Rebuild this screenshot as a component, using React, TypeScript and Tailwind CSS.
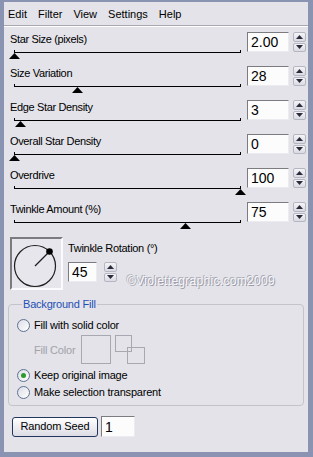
import type { ReactNode } from 'react'

const font = { fontFamily: '"Liberation Sans", Arial, sans-serif' }

const sliders = [
  { label: 'Star Size (pixels)', value: '2.00', thumb: 0 },
  { label: 'Size Variation', value: '28', thumb: 63 },
  { label: 'Edge Star Density', value: '3', thumb: 6 },
  { label: 'Overall Star Density', value: '0', thumb: 0 },
  { label: 'Overdrive', value: '100', thumb: 226 },
  { label: 'Twinkle Amount (%)', value: '75', thumb: 171 },
]

function Spinner() {
  return (
    <div className="flex h-[20px] w-[13px] flex-col gap-[1px]">
      {[true, false].map((up) => (
        <div
          key={String(up)}
          className="flex flex-1 items-center justify-center rounded-[2px] border border-[#b4b6c2] bg-gradient-to-b from-[#f4f4f8] to-[#d9dae2]"
        >
          <svg width="7" height="4" viewBox="0 0 7 4">
            <path d={up ? 'M0 4 L3.5 0 L7 4 Z' : 'M0 0 L3.5 4 L7 0 Z'} fill="#2a2a3a" />
          </svg>
        </div>
      ))}
    </div>
  )
}

function NumBox({ value, w }: { value: string; w: string }) {
  return (
    <div
      className={`flex h-[20px] ${w} items-center border border-t-[#7b7b80] border-l-[#7b7b80] border-r-[#ececf0] border-b-[#ececf0] bg-[#fcfcfc] pl-[3px] text-[14px] leading-none text-black`}
    >
      {value}
    </div>
  )
}

function SliderRow({ label, value, thumb }: { label: string; value: string; thumb: number }) {
  return (
    <div className="flex h-[34px]">
      <div className="w-[243px] pl-[6px] pt-[2px]">
        <div className="h-[14px] text-[11px] leading-[14px] tracking-[-0.35px] text-black">{label}</div>
        <div className="relative ml-[4px] mt-[4px] h-[8px] w-[227px]">
          <div className="h-[3px] w-full border-x border-b border-black" />
          <svg
            width="11"
            height="6"
            viewBox="0 0 11 6"
            className="absolute top-[3px]"
            style={{ left: thumb - 5 }}
          >
            <path d="M0 6 L5.5 0 L11 6 Z" fill="#000" />
          </svg>
        </div>
      </div>
      <div className="flex items-start gap-[4px] pt-[2px]">
        <NumBox value={value} w="w-[42px]" />
        <Spinner />
      </div>
    </div>
  )
}

function Radio({ checked, children }: { checked?: boolean; children: ReactNode }) {
  return (
    <div className="flex h-[17px] items-center gap-[4px]">
      <div className="flex h-[13px] w-[13px] items-center justify-center rounded-full border border-[#5c7291] bg-gradient-to-br from-[#dcdde6] to-[#ffffff]">
        {checked && <div className="h-[5px] w-[5px] rounded-full bg-[#2c9a2c]" />}
      </div>
      <span className="text-[11px] tracking-[-0.2px] text-black">{children}</span>
    </div>
  )
}

export default function App() {
  return (
    <div
      className="flex h-[457px] w-[313px] flex-col bg-[#8a93b2] pb-[5px] pl-[4px] pr-[5px] pt-[2px]"
      style={font}
    >
      <div className="relative flex flex-1 flex-col bg-[#e3e3e9]">
        <div className="flex h-[24px] items-center gap-[11px] border-b border-[#a9a9b4] pl-[4px] pt-[2px] text-[11px] text-black">
          <span>Edit</span>
          <span>Filter</span>
          <span>View</span>
          <span>Settings</span>
          <span>Help</span>
        </div>
        <div className="h-[1px] bg-white" />

        <div className="pt-[3px]">
          {sliders.map((s) => (
            <SliderRow key={s.label} {...s} />
          ))}
        </div>

        <div className="flex h-[54px] pl-[6px] pt-[3px]">
          <div className="h-[53px] w-[53px] border-2 border-t-[#7a7a80] border-l-[#7a7a80] border-r-[#fbfbfd] border-b-[#fbfbfd] bg-[#e6e6ec]">
            <svg width="49" height="49" viewBox="0 0 49 49">
              <circle cx="23" cy="27" r="20.5" fill="none" stroke="#1e1e1e" strokeWidth="1.2" />
              <line x1="23" y1="27" x2="37.5" y2="12.5" stroke="#1e1e1e" strokeWidth="1.2" />
              <circle cx="37.5" cy="12.5" r="3.3" fill="#000" />
            </svg>
          </div>
          <div className="ml-[5px] flex flex-col">
            <div className="h-[16px] pt-[4px] text-[11px] leading-[14px] tracking-[-0.3px] text-black">
              Twinkle Rotation (°)
            </div>
            <div className="mt-[9px] flex items-start gap-[7px]">
              <NumBox value="45" w="w-[29px]" />
              <Spinner />
            </div>
          </div>
        </div>

        <div
          className="absolute left-[123px] top-[270px] text-[12px] tracking-[0.3px] text-[#f6f6fa]"
          style={{ textShadow: '-1px -1px 0 #a8a8b4, 1px 1px 0 #9a9aa6' }}
        >
          ©Violettegraphic.com2009
        </div>

        <fieldset className="mx-[4px] mt-[8px] h-[110px] rounded-[4px] border border-[#c3c3cc] px-[8px] pt-[4px]">
          <legend className="ml-[5px] px-[1px] text-[11px] tracking-[-0.2px] text-[#1f4fb4]">
            Background Fill
          </legend>
          <Radio>Fill with solid color</Radio>
          <div className="flex h-[33px] items-start pl-[17px] pt-[1px]">
            <span className="mt-[7px] text-[11px] tracking-[-0.2px] text-[#a2a2aa]">Fill Color</span>
            <div className="ml-[6px] h-[29px] w-[30px] border border-[#a8a8b0]" />
            <div className="ml-[4px] flex h-[29px] w-[30px] flex-col">
              <div className="h-[17px] w-[17px] border border-[#a8a8b0]" />
              <div className="-mt-[5px] ml-[12px] h-[17px] w-[18px] border border-[#a8a8b0]" />
            </div>
          </div>
          <Radio checked>Keep original image</Radio>
          <Radio>Make selection transparent</Radio>
        </fieldset>

        <div className="mt-[10px] flex items-center gap-[3px] pl-[8px]">
          <div className="flex h-[20px] w-[86px] items-center justify-center rounded-[3px] border border-[#23375e] bg-gradient-to-b from-[#ffffff] to-[#dcdce4] text-[11px] tracking-[-0.1px] text-black">
            Random Seed
          </div>
          <div className="flex h-[21px] w-[34px] items-center border border-t-[#7b7b80] border-l-[#7b7b80] border-r-[#ececf0] border-b-[#ececf0] bg-[#fcfcfc] pl-[3px] text-[14px] leading-none">
            1
          </div>
        </div>
      </div>
    </div>
  )
}
